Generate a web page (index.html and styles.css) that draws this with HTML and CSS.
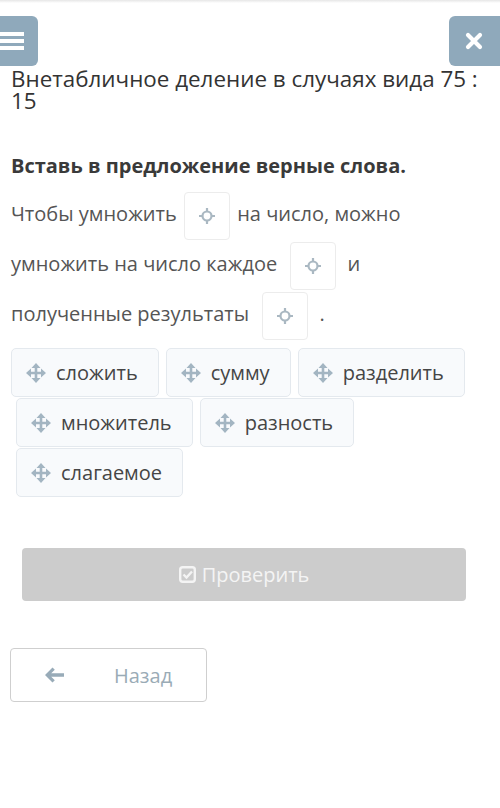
FILE: index.html
```html
<!DOCTYPE html>
<html lang="ru">
<head>
<meta charset="utf-8">
<title>Внетабличное деление</title>
<link rel="stylesheet" href="styles.css">
</head>
<body>
<div class="shade"></div>
<div class="topbar">
  <div class="btn-menu">
    <svg width="24" height="20" viewBox="0 0 24 20"><rect x="0" y="0" width="24" height="4" fill="#fff"/><rect x="0" y="7" width="24" height="4" fill="#fff"/><rect x="0" y="14" width="24" height="4" fill="#fff"/></svg>
  </div>
  <div class="btn-close">
    <svg width="18" height="18" viewBox="0 0 18 18"><path d="M3 3 L15 15 M15 3 L3 15" stroke="#fff" stroke-width="4.2" stroke-linecap="round"/></svg>
  </div>
</div>
<main class="content">
  <h1 class="title">Внетабличное деление в случаях вида 75 : 15</h1>
  <h2 class="task">Вставь в предложение верные слова.</h2>
  <div class="sentence">
    <span class="line">Чтобы умножить <span class="drop"><svg class="cross" width="18" height="18" viewBox="0 0 18 18"><circle cx="9" cy="9" r="4.5" fill="none" stroke="#aab8c2" stroke-width="2.2"/><path d="M9 1v4M9 13v4M1 9h4M13 9h4" stroke="#aab8c2" stroke-width="2.2"/></svg></span> на число, можно</span>
    <span class="line">умножить на число каждое <span class="drop wide"><svg class="cross" width="18" height="18" viewBox="0 0 18 18"><circle cx="9" cy="9" r="4.5" fill="none" stroke="#aab8c2" stroke-width="2.2"/><path d="M9 1v4M9 13v4M1 9h4M13 9h4" stroke="#aab8c2" stroke-width="2.2"/></svg></span> и</span>
    <span class="line">полученные результаты <span class="drop wide"><svg class="cross" width="18" height="18" viewBox="0 0 18 18"><circle cx="9" cy="9" r="4.5" fill="none" stroke="#aab8c2" stroke-width="2.2"/><path d="M9 1v4M9 13v4M1 9h4M13 9h4" stroke="#aab8c2" stroke-width="2.2"/></svg></span> .</span>
  </div>
  <div class="chips">
    <div class="chip first"><svg class="move" width="20" height="20" viewBox="0 0 20 20"><path d="M10 0l4.5 5h-3.2v3.7H15V5.5l5 4.5-5 4.5v-3.2h-3.7V15h3.2L10 20l-4.5-5h3.2v-3.7H5v3.2L0 10l5-4.5v3.2h3.7V5H5.5z" fill="#a3b5c2"/></svg><span>сложить</span></div>
    <div class="chip"><svg class="move" width="20" height="20" viewBox="0 0 20 20"><path d="M10 0l4.5 5h-3.2v3.7H15V5.5l5 4.5-5 4.5v-3.2h-3.7V15h3.2L10 20l-4.5-5h3.2v-3.7H5v3.2L0 10l5-4.5v3.2h3.7V5H5.5z" fill="#a3b5c2"/></svg><span>сумму</span></div>
    <div class="chip"><svg class="move" width="20" height="20" viewBox="0 0 20 20"><path d="M10 0l4.5 5h-3.2v3.7H15V5.5l5 4.5-5 4.5v-3.2h-3.7V15h3.2L10 20l-4.5-5h3.2v-3.7H5v3.2L0 10l5-4.5v3.2h3.7V5H5.5z" fill="#a3b5c2"/></svg><span>разделить</span></div>
    <div class="chip"><svg class="move" width="20" height="20" viewBox="0 0 20 20"><path d="M10 0l4.5 5h-3.2v3.7H15V5.5l5 4.5-5 4.5v-3.2h-3.7V15h3.2L10 20l-4.5-5h3.2v-3.7H5v3.2L0 10l5-4.5v3.2h3.7V5H5.5z" fill="#a3b5c2"/></svg><span>множитель</span></div>
    <div class="chip"><svg class="move" width="20" height="20" viewBox="0 0 20 20"><path d="M10 0l4.5 5h-3.2v3.7H15V5.5l5 4.5-5 4.5v-3.2h-3.7V15h3.2L10 20l-4.5-5h3.2v-3.7H5v3.2L0 10l5-4.5v3.2h3.7V5H5.5z" fill="#a3b5c2"/></svg><span>разность</span></div>
    <div class="chip"><svg class="move" width="20" height="20" viewBox="0 0 20 20"><path d="M10 0l4.5 5h-3.2v3.7H15V5.5l5 4.5-5 4.5v-3.2h-3.7V15h3.2L10 20l-4.5-5h3.2v-3.7H5v3.2L0 10l5-4.5v3.2h3.7V5H5.5z" fill="#a3b5c2"/></svg><span>слагаемое</span></div>
  </div>
  <div class="check-wrap">
    <button class="check" type="button"><svg width="17" height="17" viewBox="0 0 17 17"><rect x="1.2" y="1.2" width="14.6" height="14.6" rx="2.5" fill="none" stroke="#f4f4f4" stroke-width="2.4"/><path d="M4.5 8.5l3 3 5.5-6" fill="none" stroke="#f4f4f4" stroke-width="2.4"/></svg><span>Проверить</span></button>
  </div>
  <button class="back" type="button"><svg width="19" height="16" viewBox="0 0 19 16"><path d="M0 8l7.5-7.5 2.3 2.3-3.6 3.5H19v3.4H6.2l3.6 3.5-2.3 2.3z" fill="#98abb8"/></svg><span>Назад</span></button>
</main>
</body>
</html>
```
FILE: styles.css
```css
html, body {
  margin: 0;
  padding: 0;
  background: #fff;
}
body {
  width: 500px;
  height: 808px;
  overflow: hidden;
  font-family: "Open Sans", "Noto Sans", sans-serif;
  color: #333;
}
.shade {
  height: 3px;
  background: linear-gradient(#e6e6e6, #fff);
}
.topbar {
  display: flex;
  justify-content: space-between;
  margin-top: 13px;
  height: 50px;
}
.btn-menu {
  width: 38px;
  height: 50px;
  background: #8fa9bb;
  border-radius: 0 6px 6px 0;
  display: flex;
  align-items: center;
}
.btn-menu svg { margin-top: 1px; }
.btn-close {
  width: 51px;
  height: 50px;
  background: #8fa9bb;
  border-radius: 6px 0 0 6px;
  display: flex;
  align-items: center;
  justify-content: center;
}
.btn-close svg { margin-left: -2px; }
.content {
  padding-left: 11px;
}
.title {
  margin: 2px 0 0;
  font-size: 22.4px;
  font-weight: 400;
  line-height: 22px;
  color: #333;
  padding-right: 12px;
}
.task {
  margin: 42px 0 0;
  font-size: 20px;
  font-weight: 700;
  line-height: 24px;
  color: #3a3a3a;
}
.sentence {
  margin-top: 11px;
  font-size: 20px;
  color: #555;
  display: flex;
  flex-direction: column;
}
.line {
  display: block;
  height: 50px;
  line-height: 50px;
}
.drop {
  display: inline-flex;
  align-items: center;
  justify-content: center;
  width: 44px;
  height: 46px;
  border: 1px solid #ececec;
  border-radius: 4px;
  vertical-align: middle;
  margin: 0 2px;
  box-sizing: content-box;
}
.drop.wide { margin: 0 6px 0 8px; }
.chips {
  margin-top: 9px;
  display: flex;
  flex-wrap: wrap;
  gap: 1px 7px;
  padding-left: 5px;
  padding-right: 20px;
}
.chip {
  display: flex;
  align-items: center;
  height: 47px;
  padding: 0 20px 0 14px;
  background: #f8fafc;
  border: 1px solid #e4e9ee;
  border-radius: 5px;
  font-size: 20px;
  color: #454545;
}
.chip.first { margin-left: -5px; }
.chip .move { margin-right: 10px; }
.check-wrap {
  margin-top: 51px;
  padding-left: 11px;
}
.check {
  display: flex;
  align-items: center;
  justify-content: center;
  gap: 6px;
  width: 444px;
  height: 53px;
  background: #cccccc;
  border: none;
  border-radius: 4px;
  font-family: "Open Sans", "Noto Sans", sans-serif;
  font-size: 20px;
  color: #f4f4f4;
  padding: 0;
}
.back {
  display: flex;
  align-items: center;
  margin-top: 47px;
  margin-left: -1px;
  width: 197px;
  height: 54px;
  background: #fff;
  border: 1px solid #cfcfcf;
  border-radius: 4px;
  padding: 0 0 0 34px;
  font-family: "Open Sans", "Noto Sans", sans-serif;
  font-size: 20px;
  color: #9aabb6;
}
.back svg { margin-right: 50px; }
```
